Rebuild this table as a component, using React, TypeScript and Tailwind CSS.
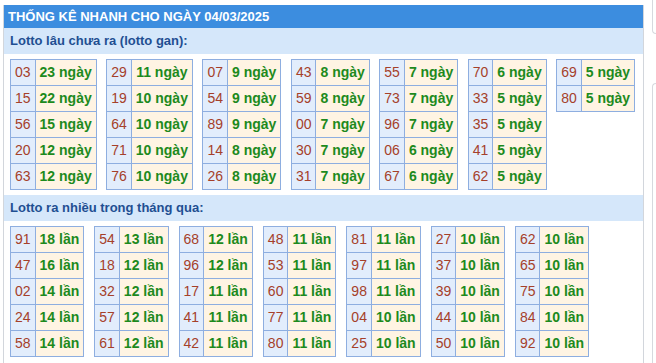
import React from "react";

type Item = [string, string];

const GAN: Item[][] = [
    [["03", "23 ngày"], ["15", "22 ngày"], ["56", "15 ngày"], ["20", "12 ngày"], ["63", "12 ngày"]],
    [["29", "11 ngày"], ["19", "10 ngày"], ["64", "10 ngày"], ["71", "10 ngày"], ["76", "10 ngày"]],
    [["07", "9 ngày"], ["54", "9 ngày"], ["89", "9 ngày"], ["14", "8 ngày"], ["26", "8 ngày"]],
    [["43", "8 ngày"], ["59", "8 ngày"], ["00", "7 ngày"], ["30", "7 ngày"], ["31", "7 ngày"]],
    [["55", "7 ngày"], ["73", "7 ngày"], ["96", "7 ngày"], ["06", "6 ngày"], ["67", "6 ngày"]],
    [["70", "6 ngày"], ["33", "5 ngày"], ["35", "5 ngày"], ["41", "5 ngày"], ["62", "5 ngày"]],
    [["69", "5 ngày"], ["80", "5 ngày"]],
];

const NHIEU: Item[][] = [
    [["91", "18 lần"], ["47", "16 lần"], ["02", "14 lần"], ["24", "14 lần"], ["58", "14 lần"]],
    [["54", "13 lần"], ["18", "12 lần"], ["32", "12 lần"], ["57", "12 lần"], ["61", "12 lần"]],
    [["68", "12 lần"], ["96", "12 lần"], ["17", "11 lần"], ["41", "11 lần"], ["42", "11 lần"]],
    [["48", "11 lần"], ["53", "11 lần"], ["60", "11 lần"], ["77", "11 lần"], ["80", "11 lần"]],
    [["81", "11 lần"], ["97", "11 lần"], ["98", "11 lần"], ["04", "10 lần"], ["25", "10 lần"]],
    [["27", "10 lần"], ["37", "10 lần"], ["39", "10 lần"], ["44", "10 lần"], ["50", "10 lần"]],
    [["62", "10 lần"], ["65", "10 lần"], ["75", "10 lần"], ["84", "10 lần"], ["92", "10 lần"]],
];

function LotoTable({ rows }: { rows: Item[] }) {
    return (
        <table className="shrink-0 border-collapse whitespace-nowrap text-[14px] leading-[17px]">
            <tbody>
                {rows.map(([num, val]) => (
                    <tr key={num}>
                        <td className="border border-[#8eaee0] bg-[#e2edfc] px-[4px] py-[4px] text-center text-[#a5402a]">
                            {num}
                        </td>
                        <td className="border border-[#8eaee0] bg-[#fff4e3] px-[4px] py-[4px] text-center font-bold text-[#1d8a1d]">
                            {val}
                        </td>
                    </tr>
                ))}
            </tbody>
        </table>
    );
}

function Section({ title, data, gap }: { title: string; data: Item[][]; gap: string }) {
    return (
        <div>
            <div className="h-[26px] bg-[#d5e7fa] pl-[6px] text-[13px] font-bold leading-[26px] text-[#1f4f92]">
                {title}
            </div>
            <div className={`flex items-start px-[6px] pt-[5px] pb-[5px] ${gap}`}>
                {data.map((rows, i) => (
                    <LotoTable key={i} rows={rows} />
                ))}
            </div>
        </div>
    );
}

export default function App() {
    return (
        <div
            className="flex h-[363px] w-[656px] overflow-hidden bg-white"
            style={{ fontFamily: '"Liberation Sans", Arial, sans-serif' }}
        >
            {/* Main panel */}
            <div className="ml-[3px] mt-[5px] w-[641px] shrink-0 border-x border-[#d2d6dc]">
                <div className="h-[23px] bg-[#3c8ddf] pl-[4px] text-[13px] font-bold leading-[23px] text-white">
                    THỐNG KÊ NHANH CHO NGÀY 04/03/2025
                </div>
                <Section title="Lotto lâu chưa ra (lotto gan):" data={GAN} gap="gap-[9.5px]" />
                <Section title="Lotto ra nhiều trong tháng qua:" data={NHIEU} gap="gap-[10px]" />
            </div>

            {/* Side panels, clipped */}
            <div className="ml-[8px] flex flex-1 flex-col">
                <div className="h-[34px] rounded-bl-[4px] border-b border-l border-[#d6d9de]" />
                <div className="mt-[49px] flex-1 rounded-tl-[4px] border-l border-t border-[#d6d9de]" />
            </div>
        </div>
    );
}
